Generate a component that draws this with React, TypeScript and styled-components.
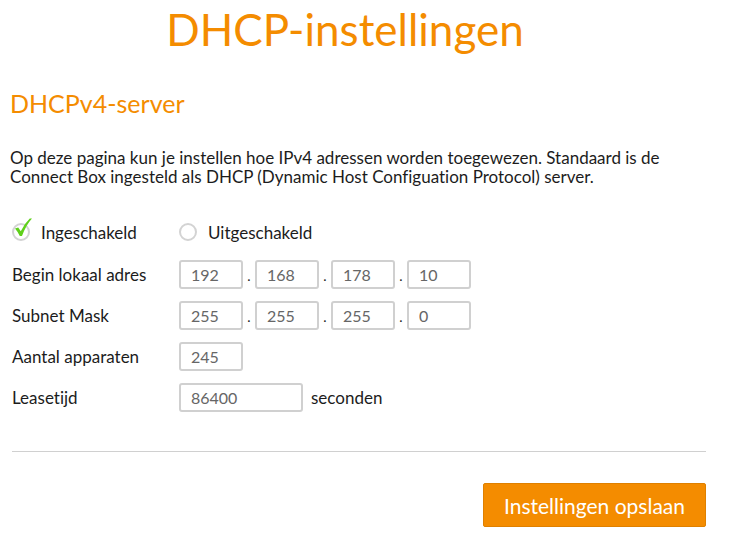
import React from "react";
import styled, { createGlobalStyle } from "styled-components";

const Global = createGlobalStyle`
  *, *::before, *::after { box-sizing: border-box; }
  body {
    margin: 0; background: #fff; color: #1c1c1c; font: 17px/19px Lato, sans-serif;
    font-variant-ligatures: none;
  }
`;

const Page = styled.main`padding: 0 28px 12px 10px;`;

const Title = styled.h1`
  margin: 0 26px 0 0; padding-top: 2px; font-size: 44px; line-height: 54px; font-weight: 400;
  color: #f48c00; text-align: center;
`;
const Subtitle = styled.h2`
  margin: 31px 0 0; font-size: 25px; line-height: 32px; font-weight: 400; color: #f48c00;
`;
const Intro = styled.p`margin: 29px 0 0; max-width: 660px;`;

const Form = styled.form`margin: 0;`;
const Modes = styled.div`
  display: flex; margin: 32px 0 0 2px; height: 28px; align-items: center;
`;
const Mode = styled.label<{ $width?: number }>`
  display: flex; align-items: center; gap: 11px; min-width: ${p => p.$width ?? 0}px;
`;
const Dial = styled.span`position: relative; display: block; width: 18px; height: 18px;`;
const Radio = styled.input`
  appearance: none; display: block; margin: 0; width: 18px; height: 18px;
  border: 2px solid #d3d3d3; border-radius: 50%; background: #fff;
  & + svg { display: none; }
  &:checked + svg { display: block; }
`;
const Tick = styled.svg`position: absolute; left: 0; top: -6px; pointer-events: none;`;

const Row = styled.div`
  display: flex; align-items: center; height: 29px; margin: 0 0 0 2px;
  & + & { margin-top: 12px; }
`;
const Rows = styled.div`margin-top: 14px;`;
const Label = styled.label`width: 167px; flex: none;`;
const Field = styled.input<{ $wide?: boolean }>`
  width: ${p => (p.$wide ? 124 : 64)}px; height: 29px; padding: 0 10px 1px;
  border: 2px solid #d0d0d0; border-radius: 3px; background: #fff; color: #666;
  font: 16px/19px Lato, sans-serif; outline: none;
`;
const Dot = styled.span`width: 12px; text-align: center; font-size: 14px; padding-top: 2px;`;
const Unit = styled.span`margin-left: 8px;`;
const Rule = styled.hr`margin: 39px 0 31px 2px; border: 0; border-top: 1px solid #d0d0d0;`;
const Actions = styled.div`display: flex; justify-content: flex-end;`;
const Save = styled.button`
  padding: 2px 20px 0; height: 44px; border: 1px solid #df8000; border-radius: 2px;
  background: #f48c00; color: #fff; font: 21px/24px Lato, sans-serif;
`;

function Octets({ label, name, values }: { label: string; name: string; values: string[] }) {
  return (
    <Row>
      <Label htmlFor={name + "0"}>{label}</Label>
      {values.map((value, i) => (
        <React.Fragment key={i}>
          {i > 0 && <Dot>.</Dot>}
          <Field id={name + i} aria-label={i ? `${label} ${i + 1}` : undefined} defaultValue={value} />
        </React.Fragment>
      ))}
    </Row>
  );
}

function ModeOption({ label, checked, width }: { label: string; checked?: boolean; width?: number }) {
  return (
    <Mode $width={width}>
      <Dial>
        <Radio type="radio" name="mode" defaultChecked={checked} />
        <Tick width="21" height="22" viewBox="0 0 21 22" aria-hidden="true">
          <path d="M3 11.5 L6.2 10.5 L8.8 14.2 Q12 7 17.8 1.5 L20 1.5 Q14 8 10 19 L7.8 19 Q6 15 3 11.5 Z" fill="#5fd01a" />
        </Tick>
      </Dial>
      {label}
    </Mode>
  );
}

export default function App() {
  return (
    <>
      <Global />
      <Page>
        <Title>DHCP-instellingen</Title>
        <Subtitle>DHCPv4-server</Subtitle>
        <Intro>
          Op deze pagina kun je instellen hoe IPv4 adressen worden toegewezen. Standaard is de
          Connect Box ingesteld als DHCP (Dynamic Host Configuation Protocol) server.
        </Intro>
        <Form onSubmit={e => e.preventDefault()}>
          <Modes role="radiogroup" aria-label="DHCPv4-server">
            <ModeOption label="Ingeschakeld" checked width={167} />
            <ModeOption label="Uitgeschakeld" />
          </Modes>
          <Rows>
            <Octets label="Begin lokaal adres" name="start" values={["192", "168", "178", "10"]} />
            <Octets label="Subnet Mask" name="mask" values={["255", "255", "255", "0"]} />
            <Row>
              <Label htmlFor="devices">Aantal apparaten</Label>
              <Field id="devices" defaultValue="245" />
            </Row>
            <Row>
              <Label htmlFor="lease">Leasetijd</Label>
              <Field id="lease" $wide defaultValue="86400" />
              <Unit>seconden</Unit>
            </Row>
          </Rows>
          <Rule />
          <Actions>
            <Save type="submit">Instellingen opslaan</Save>
          </Actions>
        </Form>
      </Page>
    </>
  );
}
